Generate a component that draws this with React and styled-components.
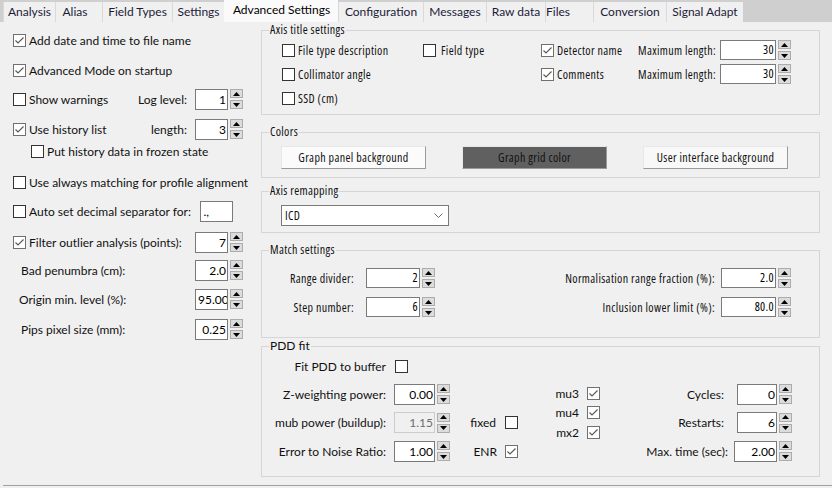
import styled, { createGlobalStyle } from 'styled-components'

const ui = `Lato, "Noto Sans", sans-serif`
const narrow = `"Open Sans", "Liberation Sans", sans-serif`

const GlobalStyle = createGlobalStyle`
	html, body {
		margin: 0;
		background: #f0f0f0;
	}
	body {
		width: 832px;
		height: 488px;
		overflow: hidden;
	}
`

const Window = styled.div`
	width: 832px;
	height: 488px;
	background: #f0f0f0;
	font-family: ${ui};
	font-size: 12px;
	color: #101010;
`
const TabStrip = styled.div`
	display: flex;
	align-items: flex-end;
	height: 22px;
	padding-left: 3px;
	background: #cfcfcf;
`
const Tab = styled.div`
	box-sizing: border-box;
	width: ${(p) => p.$w}px;
	height: ${(p) => (p.$active ? 22 : 20)}px;
	line-height: 20px;
	padding-right: ${(p) => p.$pr || 0}px;
	text-align: center;
	white-space: nowrap;
	background: ${(p) => (p.$active ? '#fafafa' : '#f0f0f0')};
	border-left: 1px solid ${(p) => (p.$active ? 'transparent' : '#d9d9d9')};
	color: ${(p) => (p.$active ? '#000' : '#1c1c3a')};
`
const Body = styled.div`
	box-sizing: border-box;
	display: flex;
	height: 464px;
	margin-left: 3px;
	border-bottom: 1px solid #a0a0a0;
`
const LeftCol = styled.div`
	box-sizing: border-box;
	width: 258px;
	padding: 8px 0 0 10px;
`
const Row = styled.div`
	display: flex;
	align-items: center;
	width: ${(p) => p.$w || 230}px;
	height: 20px;
	margin-top: ${(p) => p.$mt || 0}px;
	padding-left: ${(p) => p.$indent || 0}px;
	box-sizing: border-box;
`
const Spacer = styled.div`
	flex: 1;
`
const CheckLabel = styled.label`
	display: flex;
	align-items: center;
	gap: ${(p) => p.$gap || 3}px;
	white-space: nowrap;
`
const Box = styled.span`
	box-sizing: border-box;
	display: inline-flex;
	align-items: center;
	justify-content: center;
	width: 13px;
	height: 13px;
	flex: none;
	background: #fff;
	border: 1px solid ${(p) => (p.$checked ? '#707070' : '#333')};
`
const FieldLabel = styled.span`
	white-space: nowrap;
	margin-right: ${(p) => p.$mr || 8}px;
`
const SpinWrap = styled.div`
	display: flex;
	align-items: center;
	gap: 2px;
	flex: none;
`
const Field = styled.div`
	box-sizing: border-box;
	width: ${(p) => p.$w}px;
	height: ${(p) => p.$h || 21}px;
	line-height: ${(p) => (p.$h || 21) - 2}px;
	padding: 0 1px 0 2px;
	text-align: ${(p) => (p.$left ? 'left' : 'right')};
	background: ${(p) => (p.$disabled ? '#f0f0f0' : '#fff')};
	border: 1px solid ${(p) => (p.$disabled ? '#cccccc' : '#7a7a7a')};
	color: ${(p) => (p.$disabled ? '#6d6d6d' : '#000')};
	white-space: nowrap;
	overflow: hidden;
`
const Arrows = styled.div`
	display: flex;
	flex-direction: column;
	gap: 2px;
`
const ArrowBtn = styled.div`
	box-sizing: border-box;
	display: flex;
	align-items: center;
	justify-content: center;
	width: 13px;
	height: 9px;
	background: #dcdcdc;
	border: 1px solid #acacac;
`
const RightCol = styled.div`
	display: flex;
	flex-direction: column;
	width: 559px;
`
const Group = styled.fieldset`
	margin: ${(p) => p.$mt || 0}px 0 0 0;
	padding: 0;
	min-width: 0;
	border: 1px solid #d5d5d5;
	font-family: ${(p) => (p.$ui ? ui : narrow)};
	font-stretch: ${(p) => (p.$ui ? 'normal' : '75%')};
	letter-spacing: ${(p) => (p.$ui ? 'normal' : '0.35px')};
`
const Legend = styled.legend`
	margin-left: 7px;
	padding: 0 1px;
	line-height: 14px;
	font-size: 12px;
`
const GroupInner = styled.div`
	padding: ${(p) => p.$pad};
`
const AxisGrid = styled.div`
	display: grid;
	grid-template-columns: 141px 118px 97px auto;
	grid-auto-rows: 20px;
	row-gap: 4px;
	align-items: center;
`
const ButtonRow = styled.div`
	display: flex;
	gap: 36px;
`
const ColorButton = styled.div`
	box-sizing: border-box;
	width: 145px;
	height: 23px;
	line-height: 21px;
	text-align: center;
	white-space: nowrap;
	background: ${(p) => p.$bg};
	border: 1px solid;
	border-color: #e8e8e8 #9a9a9a #9a9a9a #e8e8e8;
	color: #111;
`
const Combo = styled.div`
	box-sizing: border-box;
	display: flex;
	align-items: center;
	justify-content: space-between;
	width: 168px;
	height: 21px;
	padding: 0 5px 0 3px;
	background: #fff;
	border: 1px solid #7a7a7a;
`
const MatchRow = styled.div`
	display: flex;
	align-items: center;
	height: 20px;
	margin-top: ${(p) => p.$mt || 0}px;
`
const RightLabel = styled.span`
	display: inline-block;
	width: ${(p) => p.$w}px;
	margin-right: ${(p) => p.$mr || 8}px;
	text-align: right;
	white-space: nowrap;
`
const PddCols = styled.div`
	display: flex;
	margin-top: 3.5px;
`
const PddCol = styled.div`
	display: grid;
	grid-template-rows: 29px 28px 29px;
	align-items: center;
	width: ${(p) => p.$w}px;
`
const PddStack = styled.div`
	display: grid;
	grid-template-rows: 19px 20px 20px;
	align-items: center;
	width: ${(p) => p.$w}px;
	padding-top: 4px;
`
const Cell = styled.div`
	display: flex;
	align-items: center;
	justify-content: ${(p) => p.$justify || 'flex-start'};
	gap: ${(p) => p.$gap || 0}px;
`

const Check = ({ checked }) => (
	<Box $checked={checked}>
		{checked && (
			<svg width='11' height='11' viewBox='0 0 11 11'>
				<polyline points='1.5,5.5 4,8 9.5,2.5' fill='none' stroke='#5a5a5a' strokeWidth='1.2' />
			</svg>
		)}
	</Box>
)

const CheckItem = ({ checked, children, gap }) => (
	<CheckLabel $gap={gap}>
		<Check checked={checked} />
		<span>{children}</span>
	</CheckLabel>
)

const Spin = ({ value, w = 33, h = 21, disabled }) => (
	<SpinWrap>
		<Field $w={w} $h={h} $disabled={disabled}>
			{value}
		</Field>
		<Arrows>
			<ArrowBtn>
				<svg width='7' height='4' viewBox='0 0 7 4'>
					<path d='M0 4 L3.5 0 L7 4 Z' fill='#000' />
				</svg>
			</ArrowBtn>
			<ArrowBtn>
				<svg width='7' height='4' viewBox='0 0 7 4'>
					<path d='M0 0 L7 0 L3.5 4 Z' fill='#000' />
				</svg>
			</ArrowBtn>
		</Arrows>
	</SpinWrap>
)

const tabs = [
	['Analysis', 52],
	['Alias', 47, 8],
	['Field Types', 70],
	['Settings', 52],
	['Advanced Settings', 114, 0, true],
	['Configuration', 85],
	['Messages', 63],
	['Raw data', 59],
	['Files', 48, 28],
	['Conversion', 73],
	['Signal Adapt', 77],
]

const App = () => (
	<Window>
		<GlobalStyle />
		<TabStrip>
			{tabs.map(([label, w, pr, active]) => (
				<Tab key={label} $w={w} $pr={pr} $active={active}>
					{label}
				</Tab>
			))}
		</TabStrip>
		<Body>
			<LeftCol>
				<Row>
					<CheckItem checked>Add date and time to file name</CheckItem>
				</Row>
				<Row $mt={10}>
					<CheckItem checked>Advanced Mode on startup</CheckItem>
				</Row>
				<Row $mt={9}>
					<CheckItem>Show warnings</CheckItem>
					<Spacer />
					<FieldLabel>Log level:</FieldLabel>
					<Spin value='1' />
				</Row>
				<Row $mt={10}>
					<CheckItem checked>Use history list</CheckItem>
					<Spacer />
					<FieldLabel>length:</FieldLabel>
					<Spin value='3' />
				</Row>
				<Row $mt={2} $indent={18}>
					<CheckItem>Put history data in frozen state</CheckItem>
				</Row>
				<Row $mt={11} $w={250}>
					<CheckItem>Use always matching for profile alignment</CheckItem>
				</Row>
				<Row $mt={9}>
					<CheckItem>Auto set decimal separator for:</CheckItem>
					<Spacer />
					<Field $w={33} $left>
						.,
					</Field>
					<Spacer />
				</Row>
				<Row $mt={11}>
					<CheckItem checked>Filter outlier analysis (points):</CheckItem>
					<Spacer />
					<Spin value='7' />
				</Row>
				<Row $mt={8} $indent={8}>
					<span>Bad penumbra (cm):</span>
					<Spacer />
					<Spin value='2.0' />
				</Row>
				<Row $mt={9} $indent={6}>
					<span>Origin min. level (%):</span>
					<Spacer />
					<Spin value='95.00' />
				</Row>
				<Row $mt={10} $indent={8}>
					<span>Pips pixel size (mm):</span>
					<Spacer />
					<Spin value='0.25' />
				</Row>
			</LeftCol>

			<RightCol>
				<Group $mt={1}>
					<Legend>Axis title settings</Legend>
					<GroupInner $pad='3px 0 6px 20px'>
						<AxisGrid>
							<CheckItem>File type description</CheckItem>
							<CheckItem gap={5}>Field type</CheckItem>
							<CheckItem checked>Detector name</CheckItem>
							<Cell>
								<FieldLabel $mr={4}>Maximum length:</FieldLabel>
								<Spin value='30' w={56} h={20} />
							</Cell>
							<CheckItem>Collimator angle</CheckItem>
							<span />
							<CheckItem checked>Comments</CheckItem>
							<Cell>
								<FieldLabel $mr={4}>Maximum length:</FieldLabel>
								<Spin value='30' w={56} h={20} />
							</Cell>
							<CheckItem>SSD (cm)</CheckItem>
						</AxisGrid>
					</GroupInner>
				</Group>

				<Group $mt={10}>
					<Legend>Colors</Legend>
					<GroupInner $pad='7px 0 8px 19px'>
						<ButtonRow>
							<ColorButton $bg='#fbfbfb'>Graph panel background</ColorButton>
							<ColorButton $bg='#606060'>Graph grid color</ColorButton>
							<ColorButton $bg='#f8f8f8'>User interface background</ColorButton>
						</ButtonRow>
					</GroupInner>
				</Group>

				<Group $mt={6}>
					<Legend>Axis remapping</Legend>
					<GroupInner $pad='7px 0 6px 19px'>
						<Combo>
							<span>ICD</span>
							<svg width='9' height='5' viewBox='0 0 9 5'>
								<polyline points='0.5,0.5 4.5,4.5 8.5,0.5' fill='none' stroke='#6a6a6a' strokeWidth='1' />
							</svg>
						</Combo>
					</GroupInner>
				</Group>

				<Group $mt={10}>
					<Legend>Match settings</Legend>
					<GroupInner $pad='11px 28px 20px 0'>
						<MatchRow>
							<RightLabel $w={92} $mr={12}>Range divider:</RightLabel>
							<Spin value='2' w={54} h={20} />
							<Spacer />
							<RightLabel $w={200} $mr={6}>Normalisation range fraction (%):</RightLabel>
							<Spin value='2.0' w={55} h={20} />
						</MatchRow>
						<MatchRow $mt={9}>
							<RightLabel $w={92} $mr={12}>Step number:</RightLabel>
							<Spin value='6' w={54} h={20} />
							<Spacer />
							<RightLabel $w={200} $mr={6}>Inclusion lower limit (%):</RightLabel>
							<Spin value='80.0' w={55} h={20} />
						</MatchRow>
					</GroupInner>
				</Group>

				<Group $mt={1} $ui>
					<Legend>PDD fit</Legend>
					<GroupInner $pad='3px 0 10px 0'>
						<MatchRow>
							<RightLabel $w={124} $mr={9}>Fit PDD to buffer</RightLabel>
							<Check />
						</MatchRow>
						<PddCols>
							<PddCol $w={188}>
								<Cell>
									<RightLabel $w={124}>Z-weighting power:</RightLabel>
									<Spin value='0.00' w={41} />
								</Cell>
								<Cell>
									<RightLabel $w={124}>mub power (buildup):</RightLabel>
									<Spin value='1.15' w={41} disabled />
								</Cell>
								<Cell>
									<RightLabel $w={124}>Error to Noise Ratio:</RightLabel>
									<Spin value='1.00' w={41} />
								</Cell>
							</PddCol>
							<PddCol $w={68}>
								<span />
								<Cell $justify='flex-end' $gap={9}>
									<span>fixed</span>
									<Check />
								</Cell>
								<Cell $justify='flex-end' $gap={8}>
									<span>ENR</span>
									<Check checked />
								</Cell>
							</PddCol>
							<PddStack $w={82}>
								<Cell $justify='flex-end' $gap={8}>
									<span>mu3</span>
									<Check checked />
								</Cell>
								<Cell $justify='flex-end' $gap={8}>
									<span>mu4</span>
									<Check checked />
								</Cell>
								<Cell $justify='flex-end' $gap={8}>
									<span>mx2</span>
									<Check checked />
								</Cell>
							</PddStack>
							<PddCol $w={190}>
								<Cell>
									<RightLabel $w={124} $mr={13}>Cycles:</RightLabel>
									<Spin value='0' w={40} />
								</Cell>
								<Cell>
									<RightLabel $w={124} $mr={13}>Restarts:</RightLabel>
									<Spin value='6' w={40} />
								</Cell>
								<Cell>
									<RightLabel $w={128} $mr={6}>Max. time (sec):</RightLabel>
									<Spin value='2.00' w={43} />
								</Cell>
							</PddCol>
						</PddCols>
					</GroupInner>
				</Group>
			</RightCol>
		</Body>
	</Window>
)

export default App
